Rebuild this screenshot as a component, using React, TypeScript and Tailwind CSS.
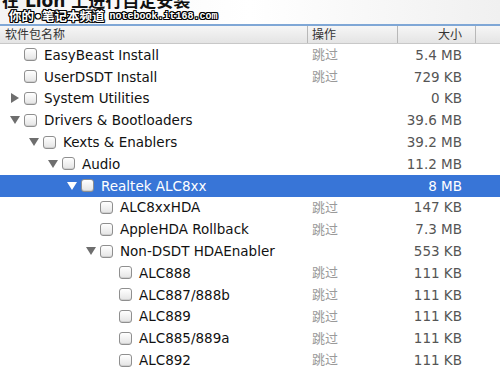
import React from "react";

type Row = {
  name: string;
  level: number;
  arrow?: "right" | "down";
  action?: string;
  size: string;
  selected?: boolean;
};

const rows: Row[] = [
  { name: "EasyBeast Install", level: 0, action: "跳过", size: "5.4 MB" },
  { name: "UserDSDT Install", level: 0, action: "跳过", size: "729 KB" },
  { name: "System Utilities", level: 0, arrow: "right", size: "0 KB" },
  { name: "Drivers & Bootloaders", level: 0, arrow: "down", size: "39.6 MB" },
  { name: "Kexts & Enablers", level: 1, arrow: "down", size: "39.2 MB" },
  { name: "Audio", level: 2, arrow: "down", size: "11.2 MB" },
  { name: "Realtek ALC8xx", level: 3, arrow: "down", size: "8 MB", selected: true },
  { name: "ALC8xxHDA", level: 4, action: "跳过", size: "147 KB" },
  { name: "AppleHDA Rollback", level: 4, action: "跳过", size: "7.3 MB" },
  { name: "Non-DSDT HDAEnabler", level: 4, arrow: "down", size: "553 KB" },
  { name: "ALC888", level: 5, action: "跳过", size: "111 KB" },
  { name: "ALC887/888b", level: 5, action: "跳过", size: "111 KB" },
  { name: "ALC889", level: 5, action: "跳过", size: "111 KB" },
  { name: "ALC885/889a", level: 5, action: "跳过", size: "111 KB" },
  { name: "ALC892", level: 5, action: "跳过", size: "111 KB" },
];

const font = { fontFamily: '"DejaVu Sans", "Noto Sans CJK SC", sans-serif' };

function Arrow({ dir, selected }: { dir: "right" | "down"; selected?: boolean }) {
  const fill = selected ? "#ffffff" : "#6e6e6e";
  return (
    <svg width="10" height="10" viewBox="0 0 10 10" className="shrink-0">
      {dir === "down" ? (
        <polygon points="0,1 10,1 5,9" fill={fill} />
      ) : (
        <polygon points="1,0 9,5 1,10" fill={fill} />
      )}
    </svg>
  );
}

function Checkbox() {
  return (
    <div className="h-[13px] w-[13px] shrink-0 rounded-[3px] border border-[#8f8f8f] bg-gradient-to-b from-white to-[#e4e4e4] shadow-[inset_0_-1px_0_#d0d0d0]" />
  );
}

export default function App() {
  return (
    <div className="relative h-[375px] w-[500px] overflow-hidden bg-white" style={font}>
      {/* title strip, cut off at the top of the capture */}
      <div className="relative h-[24px] bg-gradient-to-r from-[#f4f4f4] via-white to-[#f0f0f0]">
        <div className="absolute left-[2px] top-[-11px] text-[17px] font-bold text-[#111]">
          在 Lion 上进行自定安装
        </div>
        <div
          className="absolute left-[9px] top-[10px] flex items-center gap-[5px] text-[12.5px] font-bold leading-[13px] text-white"
          style={{ textShadow: "1px 0 #000, -1px 0 #000, 0 1px #000, 0 -1px #000, 1px 1px #000, -1px -1px #000, 1px -1px #000, -1px 1px #000" }}
        >
          <span>你的•笔记本频道</span>
          <span className="text-[10px]" style={{ fontFamily: '"Liberation Mono", monospace' }}>notebook.it168.com</span>
        </div>
      </div>
      <div className="h-[2px] bg-[#7fa7d6]" />
      {/* header */}
      <div className="flex h-[18px] items-center border-b border-[#c8c8c8] bg-gradient-to-b from-[#f6f6f6] to-[#e4e4e4] text-[12px] text-[#333]">
        <div className="w-[307px] pl-[5px]">软件包名称</div>
        <div className="h-full w-[90px] border-l border-[#b8b8b8] pl-[4px] leading-[18px]">操作</div>
        <div className="h-full w-[78px] border-l border-[#b8b8b8] pr-[13px] text-right leading-[18px]">大小</div>
        <div className="h-full flex-1 border-l border-[#b8b8b8]" />
      </div>
      {/* rows */}
      <div className="flex flex-col">
        {rows.map((r) => (
          <div
            key={r.name}
            className={`flex h-[21.8px] items-center text-[13.5px] ${r.selected ? "bg-[#3875d7] text-white" : "text-[#111]"}`}
          >
            <div className="flex w-[307px] items-center" style={{ paddingLeft: 10 + r.level * 19 }}>
              <div className="flex w-[14px] items-center">
                {r.arrow && <Arrow dir={r.arrow} selected={r.selected} />}
              </div>
              <Checkbox />
              <span className="ml-[7px] whitespace-nowrap">{r.name}</span>
            </div>
            <div className="w-[90px] pl-[5px] text-[13px] text-[#9a9a9a]">{r.action}</div>
            <div className={`w-[65px] text-right ${r.selected ? "text-white" : "text-[#555]"}`}>{r.size}</div>
          </div>
        ))}
      </div>
    </div>
  );
}
